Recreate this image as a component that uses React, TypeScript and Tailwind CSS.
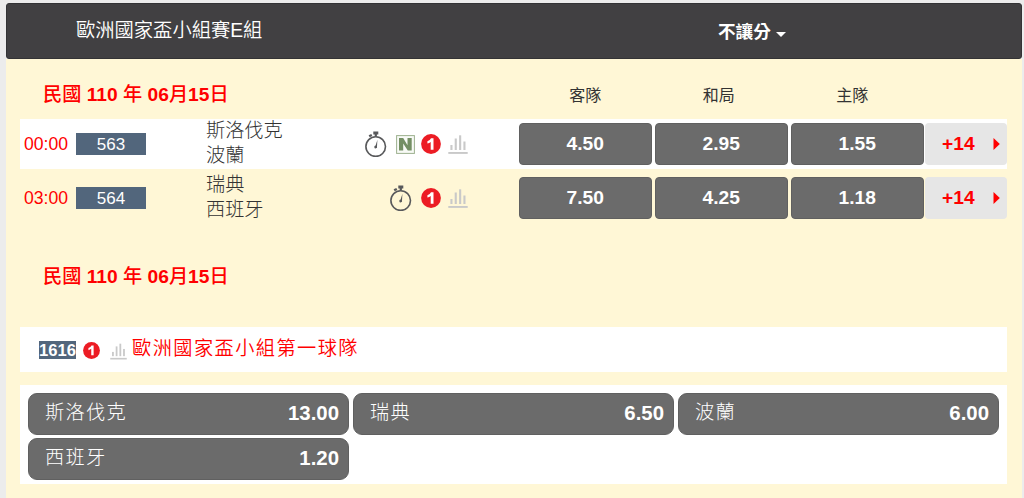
interface Match {
  id: string;
  time: string;
  away: string;
  home: string;
  neutral: boolean;
  odds: string[];
  more: string;
}

interface Option {
  name: string;
  odds: string;
}

const matches: Match[] = [
  {
    id: '563',
    time: '00:00',
    away: '斯洛伐克',
    home: '波蘭',
    neutral: true,
    odds: ['4.50', '2.95', '1.55'],
    more: '+14',
  },
  {
    id: '564',
    time: '03:00',
    away: '瑞典',
    home: '西班牙',
    neutral: false,
    odds: ['7.50', '4.25', '1.18'],
    more: '+14',
  },
];

const options: Option[] = [
  { name: '斯洛伐克', odds: '13.00' },
  { name: '瑞典', odds: '6.50' },
  { name: '波蘭', odds: '6.00' },
  { name: '西班牙', odds: '1.20' },
];

const StopwatchIcon = () => (
  <svg className="h-[26px] w-[22px] shrink-0" viewBox="0 0 22 26" fill="none">
    <circle cx="10.700" cy="15.600" r="9.800" stroke="#58595b" strokeWidth="1.600" />
    <path d="M8.300 0.500h5v3H8.300zM9.700 3h2.200v2.500H9.700z" fill="#58595b" />
    <path d="M3.600 4.200l2.700-1.200 1 1.900-2.600 1.300z" fill="#58595b" />
    <path d="M12.400 8.800l-.4 6.700a1.400 1.400 0 1 1-1.400-.9z" fill="#58595b" />
  </svg>
);

const NeutralIcon = () => (
  <svg className="h-[19px] w-[19px]" viewBox="0 0 19 19" fill="none">
    <rect x="0.600" y="0.600" width="17.800" height="17.800" fill="#f8faf6" stroke="#9db18f" strokeWidth="1" />
    <path d="M3 3h4.200l4.300 7.200V3h4.200v12.500h-3.900L7.200 8.600v6.900H3z" fill="#748f64" />
  </svg>
);

const SingleIcon = ({ className }: { className: string }) => (
  <svg className={className} viewBox="0 0 20 20">
    <circle cx="10" cy="10" r="9.900" fill="#ec1c24" />
    <path d="M10 4.200h2.500v11.500H9.700V7.900q-1.300 1.100-3.300 1.700V7.200Q9.200 6.100 10 4.200z" fill="#fff" />
  </svg>
);

const StatsIcon = ({ className }: { className: string }) => (
  <svg className={className} viewBox="0 0 20 19" fill="#c9c9c9">
    <rect x="2.400" y="10" width="2.100" height="5" />
    <rect x="6.700" y="3.500" width="2.100" height="11.500" />
    <rect x="11.100" y="0.300" width="2.100" height="14.700" />
    <rect x="15.400" y="6.500" width="2.100" height="8.500" />
    <rect x="0.300" y="17" width="19.400" height="1.900" />
  </svg>
);

const DateHeading = () => (
  <h2 className="w-[475px] pl-[23px] text-[19.200px] leading-[26px] font-bold whitespace-pre text-[#f00]">
    <span className="font-medium">民國</span> 110 <span className="font-medium">年</span> 06
    <span className="font-medium">月</span>15<span className="font-medium">日</span>
  </h2>
);

const MatchRow = ({ match }: { match: Match }) => (
  <div className="flex h-[50px] items-center odd:bg-white">
    <div className="w-14 pl-1 text-[17.600px] text-[#f00]">{match.time}</div>
    <div className="h-[22px] w-[70px] bg-[#52667c] text-center text-[17px] leading-[23px] text-white">
      {match.id}
    </div>
    <div className="ml-[60px] w-[130px] pb-0.5 text-[19.200px] leading-[25px] font-light text-[#333]">
      <div>{match.away}</div>
      <div>{match.home}</div>
    </div>
    <div className="flex w-[132px] items-center justify-end">
      <StopwatchIcon />
      {match.neutral && (
        <div className="-mr-[2.500px] ml-[9px]">
          <NeutralIcon />
        </div>
      )}
      <SingleIcon className="mr-[7px] ml-[9px] h-5 w-5 shrink-0" />
      <StatsIcon className="h-[19px] w-5 shrink-0" />
    </div>
    <div className="ml-auto flex">
      {match.odds.map((value) => (
        <button
          key={value}
          className="mr-[2.500px] h-[42px] w-[133.500px] rounded border border-[#606060] bg-[#6b6b6b] text-[19.200px] font-bold text-white"
        >
          {value}
        </button>
      ))}
      <button className="-ml-[1.500px] flex h-[42px] w-[82px] items-center justify-between rounded bg-[#e6e6e6] pr-[7px] pl-[17px] text-[19.200px] font-bold text-[#f00]">
        {match.more}
        <svg className="h-3 w-[7px]" viewBox="0 0 7 12" fill="#f00">
          <path d="M0.500 0L6.800 6L0.500 12z" />
        </svg>
      </button>
    </div>
  </div>
);

export default function App() {
  return (
    <div className="h-[498px] overflow-hidden bg-[#ececec] pt-[3px] pr-[2.500px] pl-1.5 font-['Liberation_Sans','Noto_Sans_CJK_TC',sans-serif]">
      <header className="flex h-14 items-center rounded-[3px] border border-[#333335] bg-[#414042] text-white">
        <h1 className="w-[711px] pt-px pl-[69px] text-[19.300px] font-[350]">歐洲國家盃小組賽E組</h1>
        <div className="flex items-center pt-[3px] text-[17.600px] font-bold">
          不讓分
          <svg className="mt-1 ml-[5px] h-[5px] w-[10px]" viewBox="0 0 10 5" fill="#fff">
            <path d="M0 0h10L5 5z" />
          </svg>
        </div>
      </header>

      <main className="h-[439px] bg-[#fff7d6] pr-[14.500px] pl-3.5">
        <div className="flex h-[60px] items-center pt-3">
          <DateHeading />
          <div className="ml-[23.500px] flex pt-0.5 text-center text-base text-[#333]">
            <div className="w-[133.500px]">客隊</div>
            <div className="w-[133.500px]">和局</div>
            <div className="w-[133.500px]">主隊</div>
          </div>
        </div>

        <div className="flex flex-col gap-1">
          {matches.map((match) => (
            <MatchRow key={match.id} match={match} />
          ))}
        </div>

        <div className="pt-[41px] pb-[37px]">
          <DateHeading />
        </div>

        <div className="mb-[13px] flex h-[45px] items-center bg-white pl-[19px]">
          <span className="h-[18px] w-[37px] bg-[#52667c] text-center text-[16.600px] leading-[19px] font-bold text-white">
            1616
          </span>
          <SingleIcon className="mt-[2px] ml-[7px] h-[17px] w-[17px]" />
          <StatsIcon className="mt-1 ml-[9.500px] h-[17px] w-[17px]" />
          <span className="ml-[5.500px] pb-px text-[19.200px] font-[350] tracking-[1.440px] text-[#f00]">
            歐洲國家盃小組第一球隊
          </span>
        </div>

        <div className="grid h-[99px] grid-cols-3 content-start gap-x-1 gap-y-[3px] bg-white px-2 pt-2">
          {options.map((option) => (
            <button
              key={option.name}
              className="flex h-[42px] items-center justify-between rounded-[9px] border border-[#606060] bg-[#6b6b6b] pr-[9px] pb-0.5 pl-4 text-white"
            >
              <span className="text-[19.200px] font-light tracking-[1.300px]">{option.name}</span>
              <span className="text-[20.400px] font-bold">{option.odds}</span>
            </button>
          ))}
        </div>
      </main>
    </div>
  );
}
